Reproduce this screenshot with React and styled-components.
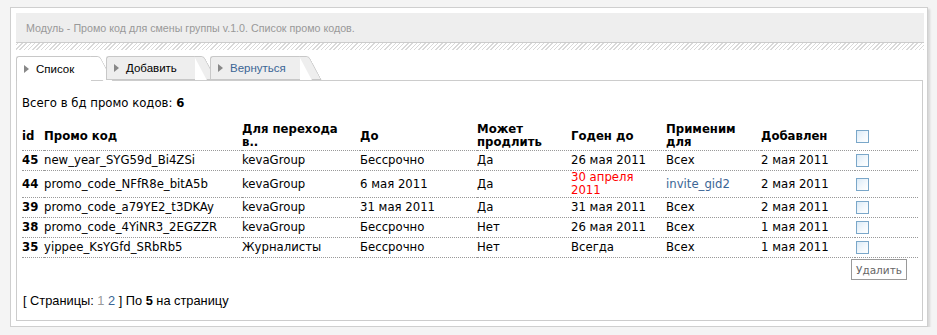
import React from "react";
import styled, { createGlobalStyle } from "styled-components";

const GlobalStyle = createGlobalStyle`
  html, body {
    margin: 0;
    padding: 0;
    background: #f4f4f4;
  }
  body {
    font-family: "DejaVu Sans", Verdana, sans-serif;
    font-size: 11.7px;
    color: #000;
  }
`;

const Page = styled.div`
  padding: 7px 9px 0 10px;
`;

const Panel = styled.div`
  background: #fff;
  border: 1px solid #cfcfcf;
  box-shadow: 2px 2px 2px rgba(0, 0, 0, 0.12);
  padding: 5px 3px 5px 5px;
`;

const TitleBar = styled.div`
  background: #eeeeee;
  border-bottom: 1px solid #cccccc;
  height: 29px;
  display: flex;
  align-items: center;
  padding-left: 10px;
  font-family: "Liberation Sans", Arial, sans-serif;
  font-size: 10.7px;
  color: #999;
`;

const Hatch = styled.div`
  height: 7px;
  margin-bottom: 6px;
  background: repeating-linear-gradient(
    -45deg,
    #d9d9d9 0px,
    #d9d9d9 1px,
    #ffffff 1px,
    #ffffff 3px
  );
`;

const TabRow = styled.div`
  display: flex;
  height: 24px;
  position: relative;
  z-index: 1;
`;

const Tab = styled.div`
  position: relative;
  width: ${(p) => p.$w}px;
  margin-right: 15px;
  height: ${(p) => (p.$active ? 25 : 24)}px;
  box-sizing: border-box;
  border-top: 1px solid #c8c8c8;
  border-left: 1px solid #c8c8c8;
  border-top-left-radius: 3px;
  background: ${(p) => (p.$active ? "#ffffff" : "#eeeeee")};
  border-bottom: ${(p) => (p.$active ? "none" : "1px solid #c8c8c8")};
  display: flex;
  align-items: center;
  padding-left: 7px;
  font-family: "Liberation Sans", Arial, sans-serif;
  font-size: 11.5px;
  color: ${(p) => (p.$link ? "#3b6595" : "#000")};

  &::after {
    content: "";
    position: absolute;
    top: -1px;
    right: -9px;
    width: 10px;
    height: ${(p) => (p.$active ? 25 : 24)}px;
    box-sizing: border-box;
    background: inherit;
    border-top: 1px solid #c8c8c8;
    border-right: 1px solid #c8c8c8;
    border-bottom: ${(p) => (p.$active ? "none" : "1px solid #c8c8c8")};
    border-top-right-radius: 3px;
    transform: skewX(28deg);
    transform-origin: top left;
  }
`;

const Arrow = styled.span`
  width: 0;
  height: 0;
  border-top: 4px solid transparent;
  border-bottom: 4px solid transparent;
  border-left: 5px solid #888;
  margin-right: 7px;
`;

const TabLabel = styled.span`
  position: relative;
  z-index: 2;
`;

const Content = styled.div`
  border: 1px solid #cccccc;
  margin-right: 1px;
  padding: 16px 6px 12px 5px;
`;

const Total = styled.div`
  line-height: 13px;
  margin-bottom: 12px;
`;

const Table = styled.table`
  width: 896px;
  table-layout: fixed;
  border-collapse: collapse;
`;

const Th = styled.th`
  text-align: left;
  font-weight: bold;
  line-height: 13px;
  padding: 1px 6px 1px 0;
  vertical-align: middle;
  border-bottom: 1px dotted #999;
`;

const Td = styled.td`
  line-height: 13px;
  padding: 0 4px 0 0;
  vertical-align: middle;
  border-bottom: 1px dotted #999;
  white-space: ${(p) => (p.$wrap ? "normal" : "nowrap")};
  color: ${(p) => (p.$red ? "#ff0000" : p.$link ? "#3b6595" : "#000")};
  font-weight: ${(p) => (p.$bold ? "bold" : "normal")};
`;

const Check = styled.span`
  display: block;
  width: 11px;
  height: 11px;
  margin: 3px 0 3px 1px;
  border: 1px solid #7aa7c9;
  background: linear-gradient(135deg, #dcebf7 0%, #f4f9fd 60%, #ffffff 100%);
`;

const Actions = styled.div`
  display: flex;
  justify-content: flex-end;
  padding-right: 9px;
  margin-top: 1px;
`;

const Button = styled.button`
  width: 56px;
  height: 21px;
  box-sizing: border-box;
  border: 1px solid #9a9a9a;
  background: #fff;
  color: #666;
  font-family: "DejaVu Sans", Verdana, sans-serif;
  font-size: 10.5px;
  padding: 0;
`;

const Pager = styled.div`
  margin-top: 14px;
  font-family: "Liberation Sans", Arial, sans-serif;
  font-size: 12.8px;
  line-height: 14px;
  padding-left: 1px;
`;

const PageNum = styled.span`
  color: ${(p) => (p.$current ? "#999" : "#3b6595")};
`;

const cols = [22, 198, 118, 117, 94, 95, 95, 94, 63];

const rows = [
  { id: 45, code: "new_year_SYG59d_Bi4ZSi", dest: "kevaGroup", until: "Бессрочно", ext: "Да", valid: "26 мая 2011", apply: "Всех", added: "2 мая 2011" },
  { id: 44, code: "promo_code_NFfR8e_bitA5b", dest: "kevaGroup", until: "6 мая 2011", ext: "Да", valid: "30 апреля 2011", expired: true, apply: "invite_gid2", link: true, added: "2 мая 2011" },
  { id: 39, code: "promo_code_a79YE2_t3DKAy", dest: "kevaGroup", until: "31 мая 2011", ext: "Да", valid: "31 мая 2011", apply: "Всех", added: "2 мая 2011" },
  { id: 38, code: "promo_code_4YiNR3_2EGZZR", dest: "kevaGroup", until: "Бессрочно", ext: "Нет", valid: "26 мая 2011", apply: "Всех", added: "1 мая 2011" },
  { id: 35, code: "yippee_KsYGfd_SRbRb5", dest: "Журналисты", until: "Бессрочно", ext: "Нет", valid: "Всегда", apply: "Всех", added: "1 мая 2011" },
];

export default function App() {
  return (
    <>
      <GlobalStyle />
      <Page>
        <Panel>
          <TitleBar>Модуль - Промо код для смены группы v.1.0. Список промо кодов.</TitleBar>
          <Hatch />
          <TabRow>
            <Tab $active $w={75}>
              <Arrow />
              <TabLabel>Список</TabLabel>
            </Tab>
            <Tab $w={89}>
              <Arrow />
              <TabLabel>Добавить</TabLabel>
            </Tab>
            <Tab $w={90} $link>
              <Arrow />
              <TabLabel>Вернуться</TabLabel>
            </Tab>
          </TabRow>
          <Content>
            <Total>
              Всего в бд промо кодов: <b>6</b>
            </Total>
            <Table>
              <colgroup>
                {cols.map((w, i) => (
                  <col key={i} style={{ width: w }} />
                ))}
              </colgroup>
              <thead>
                <tr>
                  <Th>id</Th>
                  <Th>Промо код</Th>
                  <Th>Для перехода в..</Th>
                  <Th>До</Th>
                  <Th>Может продлить</Th>
                  <Th>Годен до</Th>
                  <Th>Применим для</Th>
                  <Th>Добавлен</Th>
                  <Th>
                    <Check />
                  </Th>
                </tr>
              </thead>
              <tbody>
                {rows.map((r) => (
                  <tr key={r.id}>
                    <Td $bold>{r.id}</Td>
                    <Td>{r.code}</Td>
                    <Td>{r.dest}</Td>
                    <Td>{r.until}</Td>
                    <Td>{r.ext}</Td>
                    <Td $red={r.expired} $wrap={r.expired}>
                      {r.valid}
                    </Td>
                    <Td $link={r.link}>{r.apply}</Td>
                    <Td>{r.added}</Td>
                    <Td>
                      <Check />
                    </Td>
                  </tr>
                ))}
              </tbody>
            </Table>
            <Actions>
              <Button>Удалить</Button>
            </Actions>
            <Pager>
              [ Страницы: <PageNum $current>1</PageNum> <PageNum>2</PageNum> ] По <b>5</b> на страницу
            </Pager>
          </Content>
        </Panel>
      </Page>
    </>
  );
}
